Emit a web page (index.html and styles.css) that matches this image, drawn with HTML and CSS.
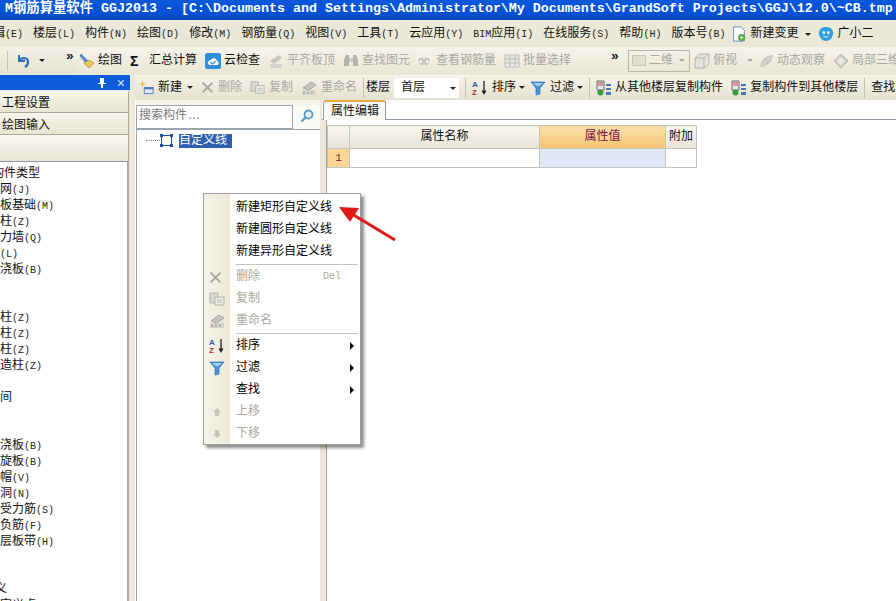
FILE: index.html
```html
<!DOCTYPE html>
<html lang="zh-CN">
<head>
  <meta charset="UTF-8" />
  <title>GGJ2013</title>
  <link rel="stylesheet" href="styles.css">
</head>
<body>
  <svg class="defs" xmlns="http://www.w3.org/2000/svg">
    <symbol id="i-x" viewBox="0 0 16 16"><path d="M2 2l12 12M14 2L2 14" stroke="#a8a8a0" stroke-width="2.4" fill="none"/></symbol>
    <symbol id="i-copy" viewBox="0 0 16 16"><path d="M1 2h8v10H1z" fill="#d8d8d0" stroke="#b4b4ac"/><path d="M6 6h9v8H6z" fill="#ecece6" stroke="#b4b4ac"/><path d="M8 9h5M8 11h5" stroke="#bcbcb4"/></symbol>
    <symbol id="i-rename" viewBox="0 0 16 16"><path d="M2 8l8-6 5 3-7 5z" fill="#c4c4bc" stroke="#a8a8a0"/><path d="M1 10h14v5H1z" fill="#d4d4cc"/><path d="M3 11v3M7 11v3M11 11v3" stroke="#9c9c94"/></symbol>
    <symbol id="i-az" viewBox="0 0 16 16"><text x="0" y="7" class="az-a">A</text><text x="0" y="15" class="az-z">Z</text><path d="M12 1v12" stroke="#222" stroke-width="1.3"/><path d="M9.5 10.5L12 15l2.5-4.500z" fill="#222"/></symbol>
    <symbol id="i-filter" viewBox="0 0 16 16"><path d="M1 2h14L10 8v6l-4 1V8z" fill="#4a93dc" stroke="#2c6cb0" stroke-width=".7"/><path d="M3 3h10L9 6H7z" fill="#a8d2f2"/></symbol>
    <symbol id="i-floor" viewBox="0 0 16 16"><path d="M1 1h7v9H1z" fill="#e8e8f0" stroke="#666"/><path d="M2 3h5M2 5h5" stroke="#c04040"/><circle cx="4.500" cy="12.500" r="3" fill="#3c9a3c"/><path d="M10 4h5v2h-5zM10 8h5v2h-5zM10 12h5v3h-5z" fill="#4a78b4"/></symbol>
  </svg>

  <div class="titlebar">
    <span class="title-clip">M钢筋算量软件 GGJ2013 - [C:\Documents and Settings\Administrator\My Documents\GrandSoft Projects\GGJ\12.0\~CB.tmp</span>
  </div>

  <div class="menubar">
    <span class="menu-first">辑<span class="key">(E)</span></span>
    <span>楼层<span class="key">(L)</span></span>
    <span>构件<span class="key">(N)</span></span>
    <span>绘图<span class="key">(D)</span></span>
    <span>修改<span class="key">(M)</span></span>
    <span>钢筋量<span class="key">(Q)</span></span>
    <span>视图<span class="key">(V)</span></span>
    <span>工具<span class="key">(T)</span></span>
    <span>云应用<span class="key">(Y)</span></span>
    <span><span class="key">BIM</span>应用<span class="key">(I)</span></span>
    <span>在线服务<span class="key">(S)</span></span>
    <span>帮助<span class="key">(H)</span></span>
    <span>版本号<span class="key">(B)</span></span>
    <span class="tool change">
      <svg class="icon" viewBox="0 0 16 18"><path d="M2 1h8l4 4v12H2z" fill="#fff" stroke="#5a86b8"/><circle cx="11" cy="13" r="4" fill="#52a83c"/><path d="M9 13h4M11 11v4" stroke="#fff"/></svg>
      新建变更<i class="drop drop-wide"></i>
    </span>
    <span class="tool xiao">
      <svg class="icon" viewBox="0 0 18 18"><path d="M9 1c5 0 8 3 8 7s-3 9-8 9-8-5-8-9 3-7 8-7z" fill="#2f9fe0"/><circle cx="6.500" cy="7.500" r="1.500" fill="#fff"/><circle cx="11.500" cy="7.500" r="1.500" fill="#fff"/><path d="M6 11c2 2 4 2 6 0" stroke="#fff" fill="none"/></svg>
      广小二
    </span>
  </div>

  <div class="toolbar">
    <div class="tb-start">
      <i class="sep"></i>
      <svg class="icon" viewBox="0 0 16 16"><path d="M4 2v6h6" fill="none" stroke="#2a6fc0" stroke-width="2"/><path d="M4 8c2-4 9-4 9 1 0 2-1 4-3 5" fill="none" stroke="#2a6fc0" stroke-width="2.200"/></svg>
      <i class="drop"></i>
      <span class="more">&raquo;</span>
    </div>
    <div class="tb-main">
      <span class="tool">
        <svg class="icon" viewBox="0 0 16 16"><path d="M2 1l7 7-2 2-6-7z" fill="#5a90d0" stroke="#2c5c9c" stroke-width=".6"/><path d="M5 10l5-3 5 3-5 5z" fill="#e8c858" stroke="#8a7a30" stroke-width=".6"/></svg>
        绘图
      </span>
      <span class="tool sigma"><b>Σ</b>汇总计算</span>
      <span class="tool">
        <svg class="icon" viewBox="0 0 16 16"><rect width="16" height="16" rx="2" fill="#2f8fdc"/><path d="M3 11c-1-3 2-4 3-4 1-3 6-2 6 1 2 0 2 4 0 4H5z" fill="#fff"/><path d="M5.500 9l2 2 3-3" fill="none" stroke="#2f8fdc" stroke-width="1.200"/></svg>
        云检查
      </span>
      <span class="tool off">
        <svg class="icon" viewBox="0 0 16 16"><path d="M2 8l9-6 3 3-8 6z" fill="#c8c8c0"/><path d="M2 11h12v4H2z" fill="#d4d4cc"/></svg>
        平齐板顶
      </span>
      <span class="tool off">
        <svg class="icon" viewBox="0 0 16 16"><path d="M1 7l2-5h3v11H1zM15 7l-2-5h-3v11h5z" fill="#b4b4ac"/><path d="M6 5h4v4H6z" fill="#cacac2"/></svg>
        查找图元
      </span>
      <span class="tool off">
        <svg class="icon small" viewBox="0 0 12 12"><path d="M1 6c0-3 4-3 4-1v3c0 2-3 1-3 0M11 6c0-3-4-3-4-1v3c0 2 3 1 3 0" fill="none" stroke="#b4b4ac" stroke-width="1.400"/></svg>
        查看钢筋量
      </span>
      <span class="tool off">
        <svg class="icon" viewBox="0 0 16 16"><path d="M1 2h14v12H1z" fill="#e8e8e2" stroke="#c0c0b8"/><path d="M1 6h14M1 10h14M6 2v12M11 2v12" stroke="#c0c0b8"/></svg>
        批量选择
      </span>
      <span class="more more-2">&raquo;</span>
      <span class="combo-2d"><i class="swatch"></i>二维<i class="drop"></i></span>
      <span class="tool off">
        <svg class="icon" viewBox="0 0 16 16"><path d="M1 5l5-4h9v10l-5 4H1z" fill="#e4e4dc" stroke="#b4b4ac"/><path d="M1 5h9v10M10 5l5-4" fill="none" stroke="#b4b4ac"/></svg>
        俯视<i class="drop drop-far"></i>
      </span>
      <span class="tool off">
        <svg class="icon" viewBox="0 0 16 16"><path d="M2 14C2 8 8 2 15 2c0 6-6 12-13 12z" fill="#cacac2"/><path d="M4 12l9-8" stroke="#e8e8e0"/></svg>
        动态观察
      </span>
      <span class="tool off">
        <svg class="icon" viewBox="0 0 16 16"><path d="M8 1l7 7-7 7-7-7z" fill="#d0d0c8" stroke="#b0b0a8"/><path d="M4 8l4-4 4 4-4 4z" fill="#ecece6"/></svg>
        局部三维
      </span>
    </div>
  </div>

  <div class="workspace">
    <aside class="nav">
      <div class="nav-head">
        <svg class="pin" viewBox="0 0 8 10"><path d="M2 0h4v5h2v1H5v4H3V6H0V5h2z" fill="#fff"/></svg>
        <span class="nav-close">&times;</span>
      </div>
      <div class="nav-tab">工程设置</div>
      <div class="nav-tab">绘图输入</div>
      <div class="nav-blank"></div>
      <ul class="nav-list">
        <li class="cut-first">构件类型</li>
        <li>轴网<span class="key">(J)</span></li>
        <li>筏板基础<span class="key">(M)</span></li>
        <li>框柱<span class="key">(Z)</span></li>
        <li>剪力墙<span class="key">(Q)</span></li>
        <li class="cut-none"><span class="key">(L)</span></li>
        <li>现浇板<span class="key">(B)</span></li>
        <li></li>
        <li></li>
        <li>框柱<span class="key">(Z)</span></li>
        <li>暗柱<span class="key">(Z)</span></li>
        <li>端柱<span class="key">(Z)</span></li>
        <li>构造柱<span class="key">(Z)</span></li>
        <li></li>
        <li>空间</li>
        <li></li>
        <li></li>
        <li>现浇板<span class="key">(B)</span></li>
        <li>螺旋板<span class="key">(B)</span></li>
        <li>柱帽<span class="key">(V)</span></li>
        <li>板洞<span class="key">(N)</span></li>
        <li>板受力筋<span class="key">(S)</span></li>
        <li>板负筋<span class="key">(F)</span></li>
        <li>楼层板带<span class="key">(H)</span></li>
        <li></li>
        <li></li>
        <li class="cut-far">自定义</li>
        <li>自定义点</li>
      </ul>
    </aside>

    <div class="content">
      <div class="toolbar toolbar-2">
        <span class="tool">
          <svg class="icon w15" viewBox="0 0 17 16"><path d="M6 8h10v7H6z" fill="#dce8f4" stroke="#4a78b4"/><path d="M6 8h10v2H6z" fill="#4a78b4"/><path d="M4 0l1 3 3 1-3 1-1 3-1-3-3-1 3-1z" fill="#e8c030"/></svg>
          新建<i class="drop"></i>
        </span>
        <span class="tool off"><svg class="icon w13"><use href="#i-x"/></svg>删除</span>
        <span class="tool off"><svg class="icon w15"><use href="#i-copy"/></svg>复制</span>
        <span class="tool off"><svg class="icon"><use href="#i-rename"/></svg>重命名</span>
        <i class="sep"></i>
        <span class="floor-label">楼层</span>
        <span class="combo">首层<i class="drop"></i></span>
        <i class="sep"></i>
        <span class="tool"><svg class="icon"><use href="#i-az"/></svg>排序<i class="drop drop-tight"></i></span>
        <span class="tool"><svg class="icon"><use href="#i-filter"/></svg>过滤<i class="drop drop-close"></i></span>
        <i class="sep"></i>
        <span class="tool floor-tool"><svg class="icon"><use href="#i-floor"/></svg>从其他楼层复制构件</span>
        <span class="tool floor-tool"><svg class="icon"><use href="#i-floor"/></svg>复制构件到其他楼层</span>
        <i class="sep"></i>
        <span class="tool">查找</span>
      </div>

      <div class="panes">
        <section class="tree-pane">
          <div class="search-row">
            <div class="search-box">搜索构件<span class="dots">...</span></div>
            <div class="search-btn">
              <svg viewBox="0 0 14 14"><circle cx="8.500" cy="5.500" r="4" fill="#e4f0f8" stroke="#5a9cc8" stroke-width="1.800"/><path d="M5.500 8.500L1.500 12.500" stroke="#5a9cc8" stroke-width="2.400"/></svg>
            </div>
          </div>
          <div class="tree">
            <div class="tree-node">
              <i class="tree-dots"></i>
              <svg class="tree-icon" viewBox="0 0 13 13"><path d="M1.500 1.500h10v10h-10z" fill="none" stroke="#1f4fa0"/><path d="M0 0h3v3H0zM10 0h3v3h-3zM0 10h3v3H0zM10 10h3v3h-3z" fill="#1f4fa0"/></svg>
              <span class="tree-label">自定义线</span>
            </div>
          </div>
        </section>

        <section class="props">
          <div class="tabstrip"><span class="tab">属性编辑</span></div>
          <div class="props-body">
            <table class="grid">
              <colgroup>
                <col class="c-row"><col class="c-name"><col class="c-value"><col class="c-extra">
              </colgroup>
              <tr class="grid-head">
                <th></th>
                <th>属性名称</th>
                <th class="active">属性值</th>
                <th>附加</th>
              </tr>
              <tr>
                <td class="row-no">1</td>
                <td></td>
                <td class="cur"></td>
                <td></td>
              </tr>
            </table>
          </div>
        </section>
      </div>
    </div>
  </div>

  <div class="ctx-menu">
    <div class="ctx-item"><span class="ctx-ico"></span>新建矩形自定义线</div>
    <div class="ctx-item"><span class="ctx-ico"></span>新建圆形自定义线</div>
    <div class="ctx-item"><span class="ctx-ico"></span>新建异形自定义线</div>
    <div class="ctx-sep"></div>
    <div class="ctx-item off"><span class="ctx-ico"><svg class="icon w13"><use href="#i-x"/></svg></span>删除<span class="ctx-short">Del</span></div>
    <div class="ctx-item off"><span class="ctx-ico"><svg class="icon"><use href="#i-copy"/></svg></span>复制</div>
    <div class="ctx-item off"><span class="ctx-ico"><svg class="icon"><use href="#i-rename"/></svg></span>重命名</div>
    <div class="ctx-sep"></div>
    <div class="ctx-item"><span class="ctx-ico"><svg class="icon"><use href="#i-az"/></svg></span>排序<i class="ctx-arrow"></i></div>
    <div class="ctx-item"><span class="ctx-ico"><svg class="icon"><use href="#i-filter"/></svg></span>过滤<i class="ctx-arrow"></i></div>
    <div class="ctx-item"><span class="ctx-ico"></span>查找<i class="ctx-arrow"></i></div>
    <div class="ctx-item off"><span class="ctx-ico"><svg class="icon tiny" viewBox="0 0 10 10"><path d="M5 1l4 4H7v4H3V5H1z" fill="#c4c4bc"/></svg></span>上移</div>
    <div class="ctx-item off"><span class="ctx-ico"><svg class="icon tiny" viewBox="0 0 10 10"><path d="M5 9L1 5h2V1h4v4h2z" fill="#c4c4bc"/></svg></span>下移</div>
  </div>

  <svg class="red-arrow" viewBox="0 0 60 38"><path d="M57 35L14 9" stroke="#e01818" stroke-width="3"/><path d="M1 2l20 1-9 14z" fill="#e01818"/></svg>
</body>
</html>
```

FILE: styles.css
```css
* {
  box-sizing: border-box;
}

html, body {
  margin: 0;
  height: 100%;
  overflow: hidden;
}

body {
  display: flex;
  flex-direction: column;
  position: relative;
  background-color: #ece9d8;
  color: #111;
  font: 12px/16px "Liberation Mono", "Noto Sans CJK SC", monospace;
}

.defs {
  display: none;
}

.az-a, .az-z {
  font: bold 8px "Liberation Sans", sans-serif;
}

.az-a {
  fill: #3a5aa8;
}

.az-z {
  fill: #b03030;
}

.icon {
  width: 16px;
  height: 16px;
  flex: none;
}

.icon.w13 {
  width: 13px;
  height: 13px;
}

.icon.w15 {
  width: 15px;
  height: 15px;
}

.icon.small {
  width: 12px;
  height: 12px;
  margin-right: 3px;
}

.icon.tiny {
  width: 10px;
  height: 10px;
}

.key {
  font-size: 10px;
  color: #222;
}

.drop {
  display: inline-block;
  width: 0;
  height: 0;
  margin-left: 1px;
  border: 3px solid transparent;
  border-top: 3px solid #222;
  border-bottom: 0;
}

.drop-wide {
  margin-left: 4px;
}

.drop-far {
  margin-left: 7px;
  margin-right: -3px;
}

.drop-tight {
  margin-left: -1px;
  margin-right: -3px;
}

.drop-close {
  margin-left: -1px;
}

.off .drop {
  border-top-color: #a8a8a0;
}

.sep {
  width: 1px;
  height: 20px;
  background-color: #c4c1ae;
  flex: none;
}

/* title and menu */
.titlebar {
  height: 20px;
  padding-top: 1px;
  background: linear-gradient(#0a58dc, #0450d4 70%, #0346b8);
  color: #fff;
  font-size: 13.33px;
  font-weight: bold;
  line-height: 16px;
  white-space: nowrap;
  overflow: hidden;
  flex: none;
}

.title-clip {
  display: block;
  margin-left: 5px;
}

.menubar {
  height: 27px;
  padding-top: 1px;
  display: flex;
  align-items: center;
  gap: 10px;
  background-color: #ebe8d7;
  white-space: nowrap;
  overflow: hidden;
  flex: none;
}

.menu-first {
  margin-left: -7px;
}

.change {
  margin-left: -4px;
}

.toolbar {
  height: 27px;
  display: flex;
  flex: none;
  background: linear-gradient(#f3f1e6, #e6e3d2);
  white-space: nowrap;
  overflow: hidden;
}

.tb-start {
  width: 75px;
  padding-left: 7px;
  display: flex;
  align-items: center;
  gap: 7px;
  flex: none;
}

.tb-start .drop {
  margin-left: 1px;
}

.tb-start .more {
  margin-left: 14px;
}

.more {
  font-weight: bold;
  font-size: 13px;
  margin-top: -8px;
}

.more-2 {
  margin-left: 32px;
  margin-right: 1px;
}

.tb-main {
  flex: 1;
  padding-left: 4px;
  display: flex;
  align-items: center;
  gap: 8px;
  min-width: 0;
  background: linear-gradient(#f6f4ea, #e9e6d6);
}

.tool {
  display: inline-flex;
  align-items: center;
  gap: 3px;
  flex: none;
}

.tool.xiao {
  margin-left: -3px;
}

.off {
  color: #a8a8a0;
}

.sigma b {
  width: 14px;
  margin-right: 2px;
  font: bold 14px "Liberation Sans", sans-serif;
}

.combo-2d {
  width: 62px;
  height: 22px;
  margin-right: -4px;
  padding-left: 3px;
  display: inline-flex;
  align-items: center;
  gap: 3px;
  color: #a8a8a0;
  border: 1px solid #b8b6a4;
  flex: none;
}

.combo-2d .drop {
  margin-left: 3px;
  border-top-color: #a8a8a0;
}

.swatch {
  width: 14px;
  height: 11px;
  background-color: #e0dfd0;
  border: 1px solid #c8c6b6;
}

/* left panel */
.workspace {
  flex: 1;
  display: flex;
  min-height: 0;
  background-color: #ece9d8;
}

.nav {
  width: 130px;
  display: flex;
  flex-direction: column;
  flex: none;
  padding-top: 1px;
  overflow: hidden;
}

.nav-head {
  height: 15px;
  margin-bottom: 1px;
  display: flex;
  align-items: center;
  justify-content: flex-end;
  gap: 11px;
  padding-right: 5px;
  background-color: #0c5ddc;
  color: #d8e4f8;
}

.pin {
  width: 8px;
  height: 10px;
}

.nav-close {
  font: 14px "Liberation Sans", sans-serif;
}

.nav-tab {
  height: 22px;
  width: 129px;
  padding: 5px 0 0 2px;
  border-bottom: 1px solid #aca899;
  border-right: 1px solid #aca899;
  background: linear-gradient(#f7f5ea, #e8e5d4);
}

.nav-blank {
  height: 27px;
  width: 129px;
  border-right: 1px solid #aca899;
  background: linear-gradient(#f9f8f0, #e8e5d4);
  border-bottom: 1px solid #8a96a4;
}

.nav-list {
  flex: 1;
  width: 129px;
  margin: 0;
  padding: 4px 0 0;
  list-style: none;
  background-color: #fff;
  border-right: 2px solid #a4acb4;
  overflow: hidden;
}

.nav-list li {
  height: 16px;
  margin-left: -12px;
  white-space: nowrap;
}

.nav-list li.cut-first {
  margin-left: -8px;
}

.nav-list li.cut-none {
  margin-left: 0;
}

.nav-list li.cut-far {
  margin-left: -29px;
}

/* middle column */
.content {
  flex: 1;
  min-width: 0;
  display: flex;
  flex-direction: column;
}

.toolbar-2 {
  height: 25px;
  margin-left: 5px;
  margin-top: 1px;
  padding-left: 4px;
  align-items: center;
  gap: 8px;
  background: linear-gradient(#f6f4ea, #e4e1cf);
}

.toolbar-2 .tool {
  gap: 4px;
}

.toolbar-2 .floor-tool {
  gap: 3px;
}

.toolbar-2 .sep {
  margin: 0 -2px;
}

.floor-label {
  margin-left: -4px;
}

.combo {
  width: 65px;
  height: 20px;
  margin-left: -4px;
  padding: 1px 3px 0 7px;
  display: inline-flex;
  align-items: center;
  justify-content: space-between;
  background-color: #fff;
  flex: none;
}

.panes {
  flex: 1;
  min-height: 0;
  display: flex;
  padding-left: 5px;
}

.tree-pane {
  width: 185px;
  margin-right: 2px;
  display: flex;
  flex-direction: column;
  flex: none;
  background-color: #fff;
  padding-left: 1px;
}

.search-row {
  height: 29px;
  padding-top: 5px;
  display: flex;
  background: linear-gradient(#f6f4ea 0, #f6f4ea 5px, #fbfaf4 5px);
  flex: none;
}

.search-box {
  width: 157px;
  padding: 2px 0 0 2px;
  background-color: #fff;
  border: 1px solid #9aa4ac;
  color: #777;
  flex: none;
}

.dots {
  font-size: 10px;
  letter-spacing: -2px;
}

.search-btn {
  flex: 1;
  display: flex;
  justify-content: center;
  padding-top: 4px;
}

.search-btn svg {
  width: 14px;
  height: 14px;
}

.tree {
  flex: 1;
  border-top: 1px solid #9aa4ac;
  border-left: 1px solid #9aa4ac;
  padding: 3px 0 0 9px;
}

.tree-node {
  display: flex;
  align-items: center;
  height: 15px;
}

.tree-dots {
  width: 14px;
  border-top: 1px dotted #888;
}

.tree-icon {
  width: 13px;
  height: 13px;
  margin-right: 6px;
  flex: none;
}

.tree-label {
  width: 53px;
  height: 14px;
  line-height: 14px;
  background-color: #2f5fb0;
  color: #fff;
}

/* property tab */
.props {
  flex: 1;
  min-width: 0;
  display: flex;
  flex-direction: column;
}

.tabstrip {
  height: 20px;
  padding-left: 1px;
  background-color: #fff;
  border-bottom: 1px solid #8c98a4;
  flex: none;
}

.tab {
  display: block;
  width: 63px;
  height: 20px;
  padding: 2px 0 0 7px;
  background-color: #fdfdf8;
  border: 1px solid #8c98a4;
  border-top: 2px solid #e8a83c;
  border-bottom: 0;
  border-radius: 3px 3px 0 0;
}

.props-body {
  flex: 1;
  margin-left: 4px;
  padding: 5px 0 0 0;
  background-color: #fff;
  border-left: 1px solid #9aa4ac;
}

.grid {
  table-layout: fixed;
  width: 369px;
  border-collapse: collapse;
  border-top: 1px solid #9aa4ac;
}

.c-row {
  width: 22px;
}

.c-name {
  width: 190px;
}

.c-value {
  width: 126px;
}

.c-extra {
  width: 31px;
}

.grid th, .grid td {
  padding: 0;
  border: 1px solid #c4c4c0;
  font-weight: normal;
  text-align: center;
}

.grid-head th {
  height: 23px;
  background: linear-gradient(#f8f7ef, #e8e5d6);
  white-space: nowrap;
  overflow: hidden;
}

.grid-head .active {
  background: linear-gradient(#fae0aa, #f4c470);
  color: #7a1050;
}

.grid td {
  height: 19px;
}

.grid .row-no {
  background-color: #fbd694;
  color: #7a2020;
  font-size: 11px;
}

.grid .cur {
  background-color: #dfe8f4;
}

/* popup menu */
.ctx-menu {
  position: absolute;
  left: 203px;
  top: 193px;
  width: 158px;
  height: 252px;
  padding-top: 3px;
  background: linear-gradient(90deg, #f5f3e8, #ece9d8 26px, #fff 26px);
  border: 1px solid #a0a0a0;
  color: #000;
  box-shadow: 3px 3px 3px rgba(0, 0, 0, 0.45);
}

.ctx-menu .off {
  color: #a8a8a0;
}

.ctx-item {
  position: relative;
  height: 22px;
  display: flex;
  align-items: center;
  white-space: nowrap;
}

.ctx-ico {
  width: 32px;
  padding-left: 5px;
  display: flex;
  justify-content: flex-start;
  flex: none;
}

.ctx-ico .tiny {
  margin-left: 3px;
}

.ctx-sep {
  height: 1px;
  margin: 1px 2px 1px 32px;
  background-color: #c4c4bc;
}

.ctx-short {
  margin-left: auto;
  margin-right: 19px;
  font-size: 10px;
}

.ctx-arrow {
  position: absolute;
  right: 6px;
  top: 7px;
  border: 4px solid transparent;
  border-left: 4px solid #111;
  border-right: 0;
}

.red-arrow {
  position: absolute;
  left: 338px;
  top: 205px;
  width: 60px;
  height: 38px;
}
```
